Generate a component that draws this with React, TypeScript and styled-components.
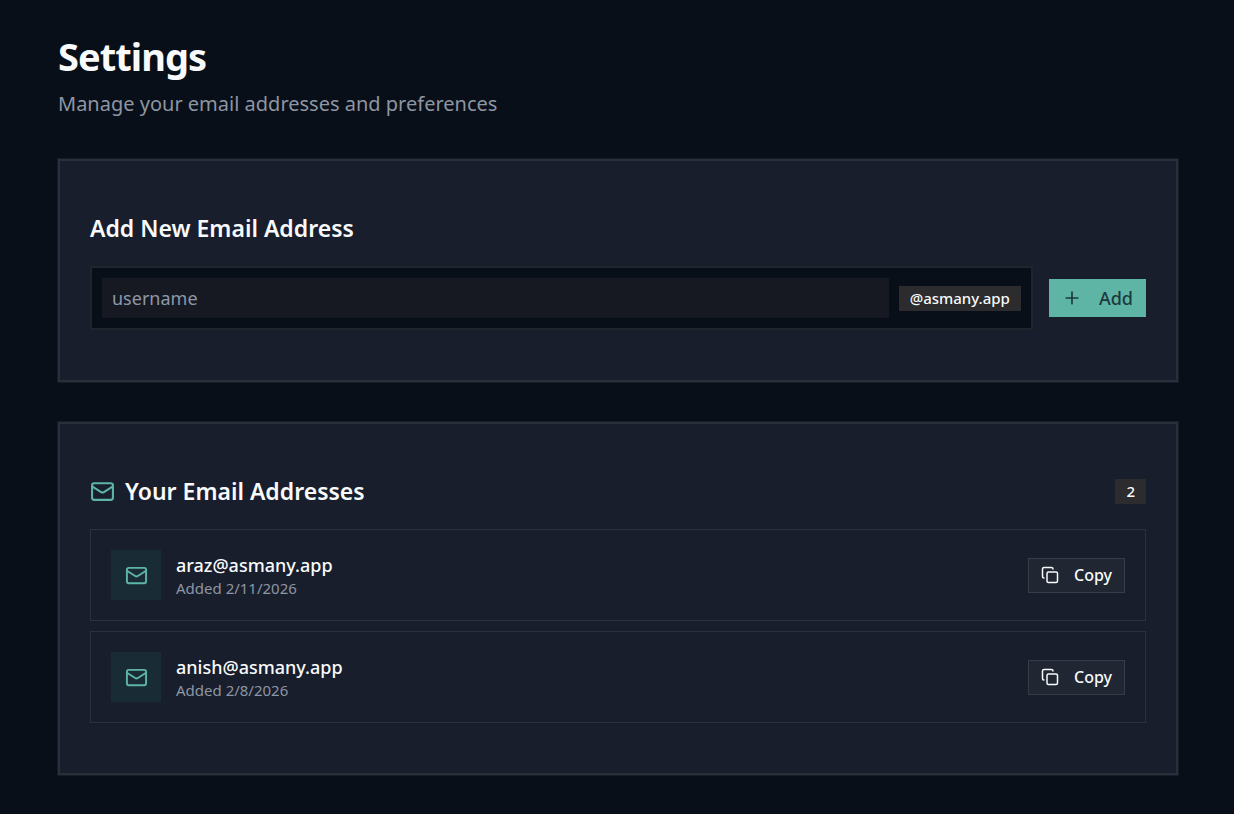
import React, { useState } from "react";
import styled, { createGlobalStyle } from "styled-components";
import { Copy, Mail, Plus } from "lucide-react";

const GlobalStyle = createGlobalStyle`
  *, *::before, *::after { box-sizing: border-box; }
  body {
    margin: 0;
    background: #080f18;
    color: #f8fafc;
    font-family: "Noto Sans", sans-serif;
  }
  h1, h2, p, ul { margin: 0; padding: 0; }
  button, input { font-family: inherit; }
`;

const Page = styled.main`
  min-height: 100vh;
  padding: 34px 56px 39px 58px;
`;

const Content = styled.div`
  display: flex;
  flex-direction: column;
  gap: 40px;
`;

const Title = styled.h1`
  font-size: 38px;
  line-height: 45px;
  font-weight: 700;
  letter-spacing: -0.025em;
`;

const Subtitle = styled.p`
  margin-top: 10px;
  font-size: 20px;
  line-height: 30px;
  color: #8e95a3;
`;

const Card = styled.section`
  padding: 50px 30px;
  border: 2px solid #29303c;
  background: #181e2b;
  box-shadow: 0 0 0 1px #191c25;
`;

const CardHeader = styled.div`
  display: flex;
  align-items: center;
  justify-content: space-between;
  margin-bottom: 20px;
`;

const CardTitle = styled.h2`
  display: flex;
  align-items: center;
  gap: 10px;
  font-size: 23px;
  line-height: 35px;
  font-weight: 600;

  svg { color: #5eb5a6; }
`;

const AddForm = styled.form`
  display: flex;
  align-items: center;
  gap: 16px;
`;

const AddressField = styled.div`
  display: flex;
  flex: 1;
  align-items: center;
  gap: 10px;
  min-width: 0;
  padding: 10px;
  border: 2px solid #20242c;
  background: #080f18;
`;

const UsernameInput = styled.input`
  flex: 1;
  min-width: 0;
  height: 40px;
  padding: 0 10px;
  border: 0;
  outline: 0;
  background: #171922;
  color: #f8fafc;
  font-size: 18px;

  &::placeholder { color: #8b98a9; opacity: 1; }
`;

const Badge = styled.span`
  padding: 0 11px;
  background: #2c2c2e;
  font-size: 15px;
  line-height: 25px;
  font-weight: 500;
`;

const Button = styled.button`
  display: flex;
  flex-shrink: 0;
  align-items: center;
  border-radius: 0;
  font-weight: 500;
  cursor: pointer;
`;

const AddButton = styled(Button)`
  gap: 17px;
  height: 38px;
  padding: 0 13px;
  border: 0;
  background: #5eb5a6;
  color: #1c3a3d;
  font-size: 18px;
`;

const CopyButton = styled(Button)`
  gap: 15px;
  height: 35px;
  padding: 0 12px;
  border: 1px solid #363c48;
  background: #202632;
  color: #f8fafc;
  font-size: 16px;
`;

const AddressList = styled.ul`
  display: flex;
  flex-direction: column;
  gap: 10px;
  list-style: none;
`;

const AddressRow = styled.li`
  display: flex;
  align-items: center;
  gap: 15px;
  padding: 20px;
  border: 1px solid #2b313d;
`;

const IconTile = styled.span`
  display: flex;
  flex-shrink: 0;
  align-items: center;
  justify-content: center;
  width: 50px;
  height: 50px;
  background: #192c36;
  color: #5eb5a6;
`;

const AddressInfo = styled.div`
  flex: 1;
  min-width: 0;
  padding-top: 2px;
`;

const AddressName = styled.p`
  font-size: 18px;
  line-height: 25px;
  font-weight: 500;
`;

const AddressDate = styled.p`
  font-size: 15px;
  line-height: 21px;
  color: #8e95a3;
`;

const addresses = [
  { email: "araz@asmany.app", added: "2/11/2026" },
  { email: "anish@asmany.app", added: "2/8/2026" },
];

export default function App() {
  const [username, setUsername] = useState("");

  return (
    <>
      <GlobalStyle />
      <Page>
        <Content>
          <header>
            <Title>Settings</Title>
            <Subtitle>Manage your email addresses and preferences</Subtitle>
          </header>

          <Card>
            <CardHeader>
              <CardTitle>Add New Email Address</CardTitle>
            </CardHeader>
            <AddForm onSubmit={(event) => event.preventDefault()}>
              <AddressField>
                <UsernameInput
                  type="text"
                  aria-label="Username"
                  placeholder="username"
                  value={username}
                  onChange={(event) => setUsername(event.target.value)}
                />
                <Badge>@asmany.app</Badge>
              </AddressField>
              <AddButton type="submit">
                <Plus size={20} strokeWidth={2} />
                Add
              </AddButton>
            </AddForm>
          </Card>

          <Card>
            <CardHeader>
              <CardTitle>
                <Mail size={25} />
                Your Email Addresses
              </CardTitle>
              <Badge>{addresses.length}</Badge>
            </CardHeader>
            <AddressList>
              {addresses.map(({ email, added }) => (
                <AddressRow key={email}>
                  <IconTile>
                    <Mail size={23} />
                  </IconTile>
                  <AddressInfo>
                    <AddressName>{email}</AddressName>
                    <AddressDate>Added {added}</AddressDate>
                  </AddressInfo>
                  <CopyButton
                    type="button"
                    onClick={() => navigator.clipboard?.writeText(email)}
                  >
                    <Copy size={18} />
                    Copy
                  </CopyButton>
                </AddressRow>
              ))}
            </AddressList>
          </Card>
        </Content>
      </Page>
    </>
  );
}
